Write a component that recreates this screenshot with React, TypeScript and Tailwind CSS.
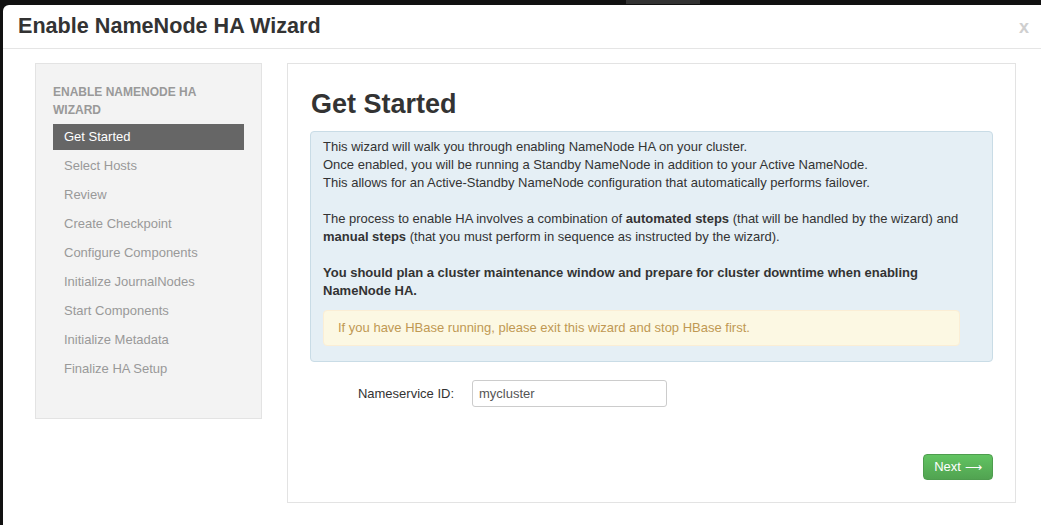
const STEPS = [
  "Get Started",
  "Select Hosts",
  "Review",
  "Create Checkpoint",
  "Configure Components",
  "Initialize JournalNodes",
  "Start Components",
  "Initialize Metadata",
  "Finalize HA Setup",
];

function Sidebar({ active }: { active: number }) {
  return (
    <div className="w-[227px] h-[356px] shrink-0 border border-[#e3e3e3] bg-[#f3f3f3] pt-[19px] px-[17px]">
      <div className="mb-[5px] text-[12px] leading-[18px] font-bold uppercase text-[#999]">
        Enable NameNode HA Wizard
      </div>
      <ul>
        {STEPS.map((s, i) => (
          <li
            key={s}
            className={
              i === active
                ? "mb-[3px] flex h-[26px] items-center bg-[#666] pl-[11px] text-[13px] text-white"
                : "mb-[3px] flex h-[26px] items-center pl-[11px] text-[13px] text-[#999]"
            }
          >
            {s}
          </li>
        ))}
      </ul>
    </div>
  );
}

export default function App() {
  return (
    <div
      className="h-[525px] w-[1041px] overflow-hidden bg-[#111]"
      style={{ fontFamily: '"Liberation Sans", Arial, sans-serif' }}
    >
      {/* top strip */}
      <div className="h-[5px]">
        <div className="ml-[626px] h-[4px] w-[74px] bg-[#333]" />
      </div>
      <div className="ml-[3px] flex h-[520px] flex-col rounded-tl-[6px] bg-white">
        {/* header */}
        <div className="flex h-[44px] items-center justify-between border-b border-[#e5e5e5] pl-[15px] pr-[12px]">
          <h3 className="text-[21.6px] font-bold text-[#333]">Enable NameNode HA Wizard</h3>
          <span className="text-[18px] font-bold leading-none text-[#cfcfcf]">x</span>
        </div>

        {/* body */}
        <div className="flex gap-[25px] pl-[32px] pt-[14px]">
          <Sidebar active={0} />

          <div className="h-[440px] w-[729px] border border-[#e3e3e3] bg-white px-[22px] pt-[21px]">
            <h2 className="h-[46px] pl-[1px] text-[27px] font-bold leading-[38px] text-[#333]">
              Get Started
            </h2>
            <div className="rounded-[4px] border border-[#c9dce6] bg-[#e5eff5] pb-[15px] pl-[12px] pr-[32px] pt-[6px] text-[13px] leading-[18px] text-[#333]">
              <p className="mb-[18px]">
                This wizard will walk you through enabling NameNode HA on your cluster.
                <br />
                Once enabled, you will be running a Standby NameNode in addition to your Active NameNode.
                <br />
                This allows for an Active-Standby NameNode configuration that automatically performs failover.
              </p>
              <p className="mb-[18px]">
                The process to enable HA involves a combination of <b>automated steps</b> (that will be handled by
                the wizard) and <b>manual steps</b> (that you must perform in sequence as instructed by the wizard).
              </p>
              <p className="mb-[10px] font-bold">
                You should plan a cluster maintenance window and prepare for cluster downtime when enabling NameNode
                HA.
              </p>
              <div className="rounded-[4px] border border-[#fbeed5] bg-[#fcf8e3] px-[14px] py-[8px] text-[#c09853]">
                If you have HBase running, please exit this wizard and stop HBase first.
              </div>
            </div>

            <div className="mt-[18px] flex items-center">
              <label className="w-[162px] pr-[18px] text-right text-[13px] text-[#333]">Nameservice ID:</label>
              <input
                defaultValue="mycluster"
                className="h-[27px] w-[195px] rounded-[3px] border border-[#ccc] px-[6px] text-[13px] text-[#555] outline-none"
              />
            </div>

            <div className="mt-[47px] flex justify-end">
              <button className="flex h-[26px] w-[70px] items-center justify-center gap-[4px] rounded-[4px] border border-[#4e9d4e] bg-gradient-to-b from-[#62c462] to-[#51a351] text-[13px] text-white">
                Next
                <span style={{ fontFamily: '"DejaVu Sans", sans-serif' }} className="text-[12px] font-light">
                  ⟶
                </span>
              </button>
            </div>
          </div>
        </div>
      </div>
    </div>
  );
}
